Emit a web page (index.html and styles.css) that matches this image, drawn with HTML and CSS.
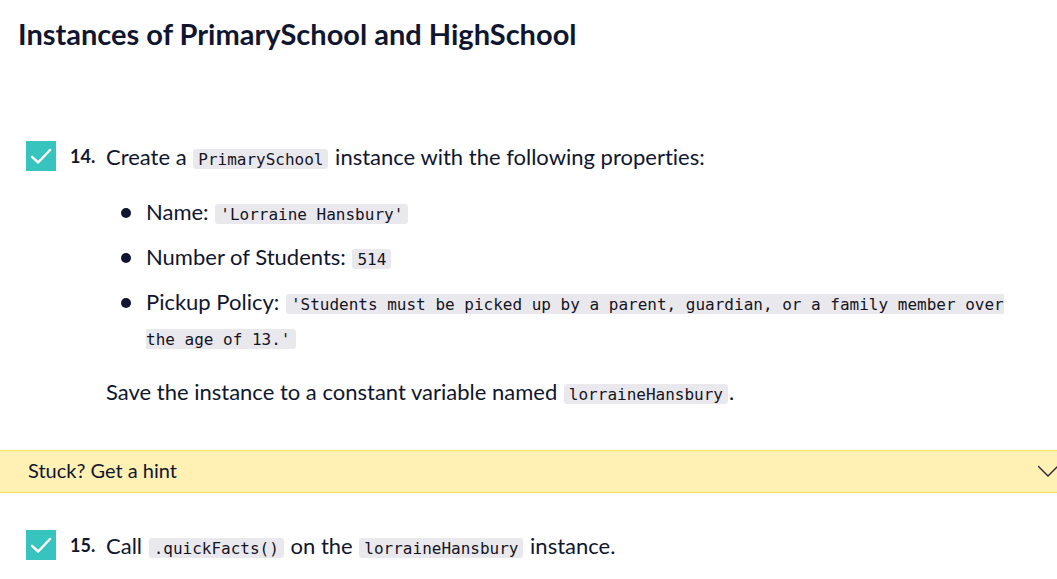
FILE: index.html
```html
<!DOCTYPE html>
<html lang="en">
<head>
<meta charset="utf-8">
<meta name="viewport" content="width=device-width, initial-scale=1">
<title>Instances of PrimarySchool and HighSchool</title>
<link rel="stylesheet" href="styles.css">
</head>
<body>
<main class="tasks">
  <h2 class="heading">Instances of PrimarySchool and HighSchool</h2>

  <section class="task">
    <span class="check">
      <input class="check-box" type="checkbox" id="task-14" checked>
      <svg class="check-mark" viewBox="0 0 30 30" aria-hidden="true"><path d="M6 15.800l6.200 5.700L24 9"/></svg>
    </span>
    <label class="number" for="task-14">14.</label>
    <div class="body">
      <p class="text">Create a <code class="code">PrimarySchool</code> instance with the following properties:</p>
      <ul class="list">
        <li class="item">Name: <code class="code">'Lorraine Hansbury'</code></li>
        <li class="item">Number of Students: <code class="code">514</code></li>
        <li class="item">Pickup Policy: <code class="code">'Students must be picked up by a parent, guardian, or a family member over the age of 13.'</code></li>
      </ul>
      <p class="text">Save the instance to a constant variable named <code class="code">lorraineHansbury</code>.</p>
    </div>
  </section>

  <button class="hint" type="button" aria-expanded="false">
    <span>Stuck? Get a hint</span>
    <svg class="chevron" viewBox="0 0 19 12" aria-hidden="true"><path d="M0 1l10 10L20 1"/></svg>
  </button>

  <section class="task">
    <span class="check">
      <input class="check-box" type="checkbox" id="task-15" checked>
      <svg class="check-mark" viewBox="0 0 30 30" aria-hidden="true"><path d="M6 15.800l6.200 5.700L24 9"/></svg>
    </span>
    <label class="number" for="task-15">15.</label>
    <div class="body">
      <p class="text">Call <code class="code">.quickFacts()</code> on the <code class="code">lorraineHansbury</code> instance.</p>
    </div>
  </section>
</main>
</body>
</html>
```
FILE: styles.css
```css
body {
  margin: 0;
  background: #fff;
  color: #10162f;
  font-family: Lato, sans-serif;
  font-size: 22px;
  font-variant-ligatures: none;
  line-height: 35px;
}

.heading {
  margin: 0;
  padding: 16px 18px 52px;
  font-size: 29px;
  font-weight: 700;
  line-height: 36px;
}

.task {
  display: grid;
  grid-template-columns: 30px 24px minmax(0, 1fr);
  column-gap: 13px;
  padding: 35px 40px 41px 26px;
}

.task:last-child {
  padding-bottom: 16px;
}

.check {
  display: grid;
  width: 30px;
  height: 30px;
  margin-top: 2px;
}

.check-box,
.check-mark {
  grid-area: 1 / 1;
  width: 30px;
  height: 30px;
  margin: 0;
}

.check-box {
  appearance: none;
  background: #fff;
  border: 1px solid #37c3be;
}

.check-box:checked {
  background: #37c3be;
}

.check-mark {
  pointer-events: none;
  fill: none;
  stroke: #fff;
  stroke-width: 2.5;
  stroke-linecap: round;
  stroke-linejoin: round;
}

.number {
  padding-left: 1px;
  font-size: 18px;
  font-weight: 700;
  line-height: 34px;
}

.body {
  display: grid;
  row-gap: 20px;
}

.text {
  margin: 0;
}

.list {
  display: grid;
  row-gap: 10px;
  margin: 0;
  padding-left: 40px;
  list-style: none;
}

.item::before {
  content: "";
  display: inline-block;
  width: 10px;
  height: 10px;
  margin: 0 15px 2px -25px;
  border-radius: 50%;
  background: #10162f;
}

.code {
  margin: 0 1px;
  padding: 1px 5px 0;
  border-radius: 3px;
  background: #e9e8ed;
  color: #15141f;
  font-family: "DejaVu Sans Mono", monospace;
  font-size: 16px;
  line-height: 16px;
}

.hint {
  display: flex;
  align-items: center;
  justify-content: space-between;
  width: 100%;
  padding: 2px 0 5px 28px;
  border: solid #ffe252;
  border-width: 1px 0;
  background: #fff0b3;
  color: #10162f;
  font: 20px/34px Lato, sans-serif;
  text-align: left;
}

.chevron {
  width: 19px;
  height: 12px;
  margin-top: 2px;
  fill: none;
  stroke: #333340;
  stroke-width: 1.5;
}
```
